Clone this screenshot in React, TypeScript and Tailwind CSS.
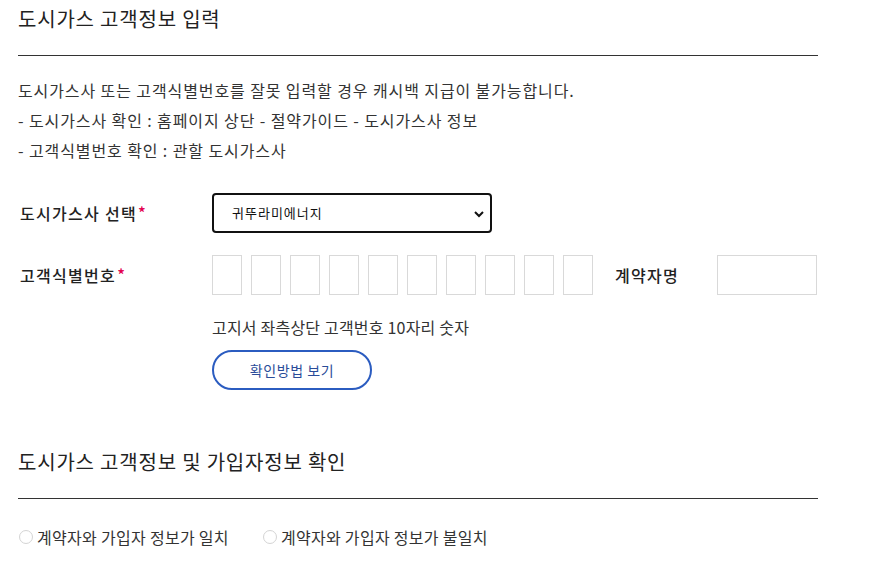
import React from "react";

const font = { fontFamily: '"Noto Sans CJK KR", "Noto Sans", sans-serif' };

function Radio({ label }: { label: string }) {
  return (
    <label className="flex items-center gap-[4px] text-[16px] leading-[24px] text-[#333] tracking-[0.3px]">
      <span className="inline-block w-[14px] h-[14px] rounded-full border border-[#d4d4d4] bg-white" />
      <span>{label}</span>
    </label>
  );
}

export default function App() {
  return (
    <div className="bg-white w-[869px] h-[564px] overflow-hidden" style={font}>
      <div className="pl-[18px] w-[818px]">
        <h2 className="text-[20px] leading-[38px] font-normal text-[#222] tracking-[0.8px] pb-[17px] border-b border-[#333]">
          도시가스 고객정보 입력
        </h2>
        <div className="mt-[19px] text-[16px] leading-[30px] text-[#333] tracking-[0.9px]">
          <p>도시가스사 또는 고객식별번호를 잘못 입력할 경우 캐시백 지급이 불가능합니다.</p>
          <p>- 도시가스사 확인 : 홈페이지 상단 - 절약가이드 - 도시가스사 정보</p>
          <p>- 고객식별번호 확인 : 관할 도시가스사</p>
        </div>

        <div className="mt-[28px] flex items-center h-[40px]">
          <div className="w-[194px] pl-[2px] text-[16px] font-medium text-[#222] tracking-[1.3px]">
            도시가스사 선택<span className="text-[#e3004f] ml-[1px] relative -top-[1px]">*</span>
          </div>
          <div className="relative w-[280px] h-[40px] border-2 border-[#111] rounded-[4px] flex items-center pl-[18px]">
            <span className="text-[13px] tracking-[1px] text-[#111]">귀뚜라미에너지</span>
            <svg className="absolute right-[5px] top-[14px]" width="12" height="10" viewBox="0 0 12 10">
              <path d="M2 3 L6 7 L10 3" stroke="#111" strokeWidth="2" fill="none" />
            </svg>
          </div>
        </div>

        <div className="mt-[22px] flex items-center h-[40px]">
          <div className="w-[194px] pl-[2px] text-[16px] font-medium text-[#222] tracking-[1.3px]">
            고객식별번호<span className="text-[#e3004f] ml-[1px] relative -top-[1px]">*</span>
          </div>
          <div className="flex gap-[9px]">
            {[0, 1, 2, 3, 4, 5, 6, 7, 8, 9].map((i) => (
              <div key={i} className="w-[30px] h-[40px] border border-[#d9d9d9]" />
            ))}
          </div>
          <div className="ml-[22px] w-[102px] text-[16px] font-medium text-[#222] tracking-[1.3px]">계약자명</div>
          <div className="w-[100px] h-[40px] border border-[#d9d9d9]" />
        </div>

        <div className="ml-[194px]">
          <p className="mt-[20px] text-[16px] leading-[24px] text-[#333] tracking-[0.2px]">고지서 좌측상단 고객번호 10자리 숫자</p>
          <button className="mt-[11px] w-[160px] h-[40px] rounded-full border-2 border-[#2b5cc0] text-[14px] text-[#2a4c99] bg-white tracking-[0.6px]">
            확인방법 보기
          </button>
        </div>

        <h2 className="mt-[53px] text-[20px] leading-[38px] font-normal text-[#222] tracking-[0.8px] pb-[17px] border-b border-[#333]">
          도시가스 고객정보 및 가입자정보 확인
        </h2>
        <div className="mt-[26px] flex items-center gap-[34px] pl-[1px]">
          <Radio label="계약자와 가입자 정보가 일치" />
          <Radio label="계약자와 가입자 정보가 불일치" />
        </div>
      </div>
    </div>
  );
}
